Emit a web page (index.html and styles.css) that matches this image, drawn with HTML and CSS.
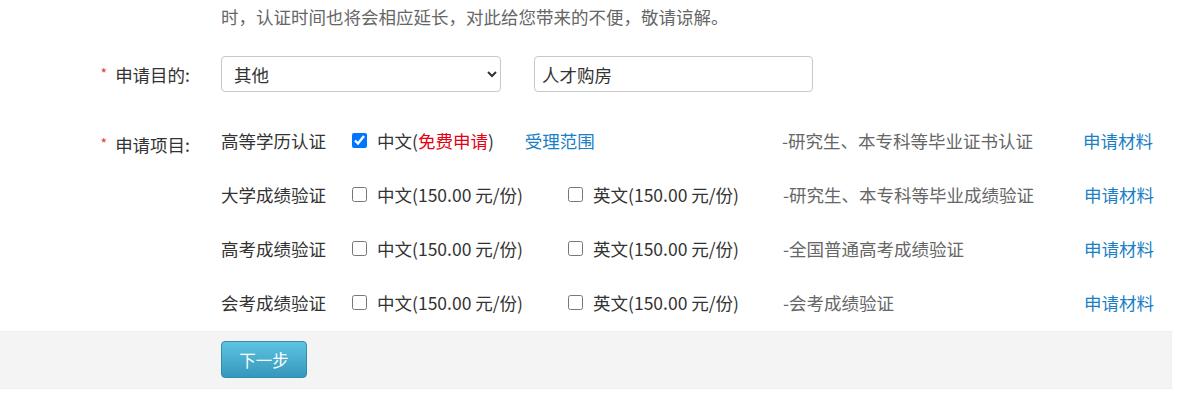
FILE: index.html
```html
<!DOCTYPE html>
<html lang="zh-CN">
<head>
  <meta charset="UTF-8">
  <title>申请认证</title>
  <link rel="stylesheet" href="styles.css">
</head>
<body>
  <div class="page">
    <p class="notice">时，认证时间也将会相应延长，对此给您带来的不便，敬请谅解。</p>

    <div class="form-row purpose">
      <label class="form-label"><span class="req">*</span>申请目的:</label>
      <div class="form-field">
        <select class="purpose-select">
          <option>其他</option>
          <option>升学</option>
          <option>就业</option>
        </select>
        <input type="text" class="purpose-input" value="人才购房">
      </div>
    </div>

    <div class="form-row items">
      <label class="form-label items-label"><span class="req">*</span>申请项目:</label>
      <div class="item-list">
        <div class="item">
          <span class="item-name">高等学历认证</span>
          <span class="opt opt-wide">
            <input type="checkbox" checked>
            <span>中文(<em class="free">免费申请</em>)</span>
            <a class="link scope" href="#">受理范围</a>
          </span>
          <span class="desc">-研究生、本专科等毕业证书认证</span>
          <a class="link" href="#">申请材料</a>
        </div>
        <div class="item">
          <span class="item-name">大学成绩验证</span>
          <span class="opt"><input type="checkbox"><span>中文(150.00 元/份)</span></span>
          <span class="opt"><input type="checkbox"><span>英文(150.00 元/份)</span></span>
          <span class="desc">-研究生、本专科等毕业成绩验证</span>
          <a class="link" href="#">申请材料</a>
        </div>
        <div class="item">
          <span class="item-name">高考成绩验证</span>
          <span class="opt"><input type="checkbox"><span>中文(150.00 元/份)</span></span>
          <span class="opt"><input type="checkbox"><span>英文(150.00 元/份)</span></span>
          <span class="desc">-全国普通高考成绩验证</span>
          <a class="link" href="#">申请材料</a>
        </div>
        <div class="item">
          <span class="item-name">会考成绩验证</span>
          <span class="opt"><input type="checkbox"><span>中文(150.00 元/份)</span></span>
          <span class="opt"><input type="checkbox"><span>英文(150.00 元/份)</span></span>
          <span class="desc">-会考成绩验证</span>
          <a class="link" href="#">申请材料</a>
        </div>
      </div>
    </div>

    <div class="actions">
      <button class="next-btn" type="button">下一步</button>
    </div>
  </div>
</body>
</html>
```

FILE: styles.css
```css
body {
  margin: 0;
  background: #fff;
  font-family: "Noto Sans CJK SC", "Noto Sans", sans-serif;
  font-size: 17.5px;
  color: #333;
}

.page {
  width: 1172px;
}

.notice {
  margin: 7px 0 0 221px;
  line-height: 20px;
  color: #666;
}

.form-row {
  display: flex;
}

.form-label {
  width: 221px;
  padding-right: 31px;
  box-sizing: border-box;
  text-align: right;
  color: #333;
}

.req {
  display: inline-block;
  margin-right: 8px;
  color: #d9472b;
  font-size: 14px;
  vertical-align: 3px;
}

.purpose {
  margin-top: 29px;
  align-items: center;
}

.form-field {
  display: flex;
  gap: 33px;
}

.purpose-select,
.purpose-input {
  height: 36px;
  border: 1px solid #c8c8c8;
  border-radius: 4px;
  font-family: inherit;
  font-size: 17.5px;
  color: #333;
  box-sizing: border-box;
  background: #fff;
}

.purpose-select {
  width: 280px;
  padding: 0 8px 0 8px;
}

.purpose-input {
  width: 279px;
  padding: 0 7px;
}

.items {
  margin-top: 21px;
  padding-bottom: 2px;
}

.items-label {
  padding-top: 19px;
}

.item-list {
  display: flex;
  flex-direction: column;
}

.item {
  display: flex;
  align-items: center;
  height: 54px;
}

.item-name {
  width: 130px;
  color: #333;
}

.opt {
  display: flex;
  align-items: center;
  width: 216px;
  color: #333;
}

.opt-wide {
  width: 431px;
}

.opt input {
  width: 15px;
  height: 15px;
  margin: 0 10px 0 1px;
}

.free {
  font-style: normal;
  color: #e60012;
}

.scope {
  margin-left: 31px;
}

.desc {
  width: 301px;
  color: #666;
}

.link {
  color: #1a7fc4;
  text-decoration: none;
}

.actions {
  background: #f4f4f4;
  border: 1px solid #efefef;
  border-left: none;
  height: 58px;
  box-sizing: border-box;
  padding: 9px 0 0 221px;
}

.next-btn {
  width: 86px;
  height: 37px;
  border: 1px solid #2e8db0;
  border-radius: 4px;
  background: linear-gradient(#5ec4e2, #3597bb);
  color: #fff;
  font-family: inherit;
  font-size: 16.5px;
  cursor: pointer;
}
```
